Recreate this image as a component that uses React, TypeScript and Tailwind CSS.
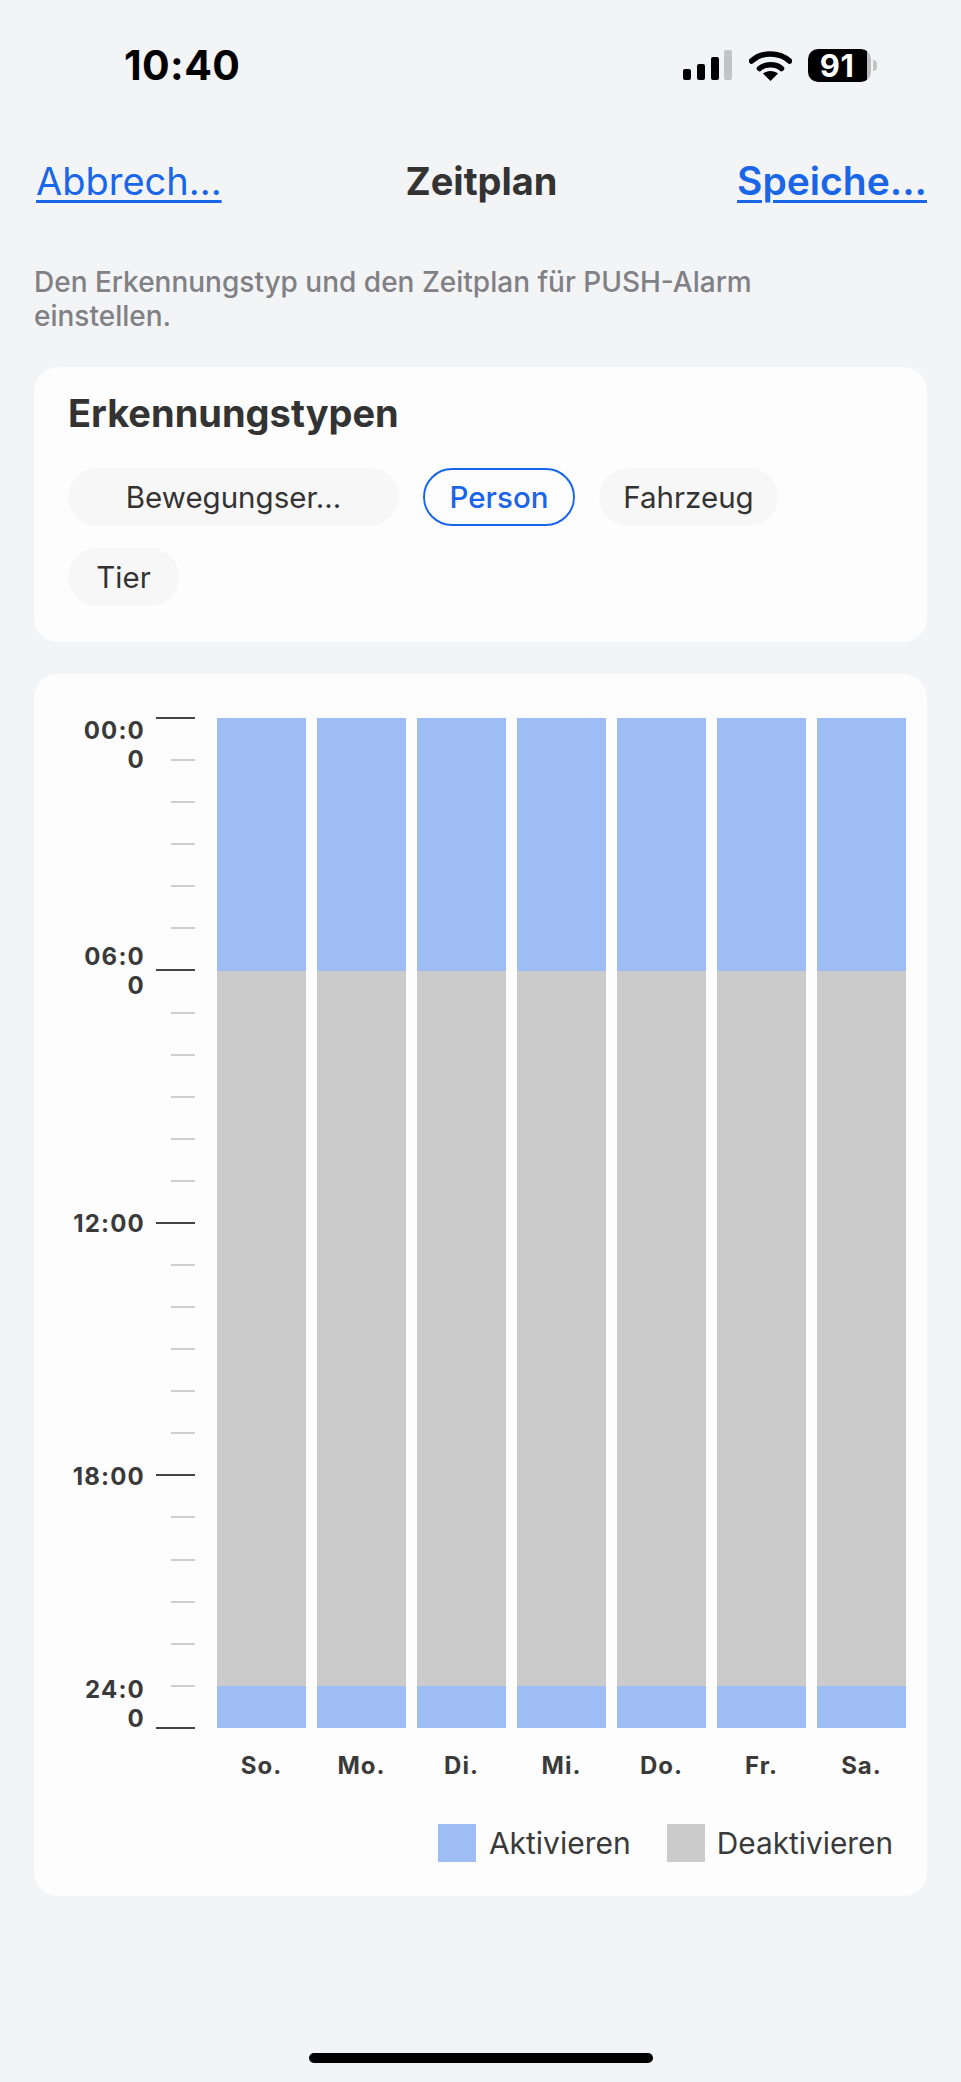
import React from 'react';

const FONT = "font-['Inter','Liberation_Sans',sans-serif]";

const days = ['So.', 'Mo.', 'Di.', 'Mi.', 'Do.', 'Fr.', 'Sa.'];

// hour => label lines, only every 6 hours has a label
const labels: Record<number, string[]> = {
  0: ['00:0', '0'],
  6: ['06:0', '0'],
  12: ['12:00'],
  18: ['18:00'],
  24: ['24:0', '0'],
};

function StatusBar() {
  return (
    <div className="flex items-center justify-between h-[34px] mt-[48px] pl-[124px] pr-[84px]">
      <span className="text-[41px] leading-[34px] font-bold text-black tracking-[0.4px]">10:40</span>
      <div className="flex items-center">
        <svg width="49" height="30" viewBox="0 0 49 30">
          <rect x="0" y="19" width="8" height="11" rx="2" fill="#000" />
          <rect x="14" y="14" width="8" height="16" rx="2" fill="#000" />
          <rect x="28" y="7" width="8" height="23" rx="2" fill="#000" />
          <rect x="41" y="0" width="8" height="30" rx="2" fill="#c4c4c4" />
        </svg>
        <svg className="ml-[17px]" width="43" height="31" viewBox="0 0 43 31">
          <path d="M2.5 11 C12.5 1.5 30.5 1.5 40.5 11" fill="none" stroke="#000" strokeWidth="5.5" strokeLinecap="round" />
          <path d="M10.5 18.5 C16 13.5 27 13.5 32.5 18.5" fill="none" stroke="#000" strokeWidth="5.5" strokeLinecap="round" />
          <path d="M21.5 31 L14 23.5 C18 20 25 20 29 23.5 Z" fill="#000" />
        </svg>
        <div className="ml-[16px] flex items-center">
          <div className="w-[63px] h-[33px] rounded-[10px] bg-[linear-gradient(90deg,#000_0,#000_93%,#bdbdbd_93%)] flex items-center justify-center pr-[5px]">
            <span className="text-[31px] leading-none font-bold text-white tracking-[0.5px]">91</span>
          </div>
          <div className="w-[4px] h-[11px] ml-[2px] rounded-r-full bg-[#c4c4c4]" />
        </div>
      </div>
    </div>
  );
}

function NavBar() {
  return (
    <div className="flex items-center justify-between mt-[74px] pl-[36px] pr-[34px]">
      <a className="w-[200px] text-[38px] leading-[50px] text-[#1a66e8] underline decoration-[3px] underline-offset-[5px]">Abbrech...</a>
      <h1 className="text-[38px] leading-[50px] font-bold text-[#333333]">Zeitplan</h1>
      <div className="w-[200px] flex justify-end">
        <a className="text-[39px] leading-[50px] font-semibold text-[#1a66e8] underline decoration-[3px] underline-offset-[5px]">Speiche...</a>
      </div>
    </div>
  );
}

function DetectionCard() {
  const chip = 'h-[58px] rounded-full flex items-center justify-center text-[29.5px]';
  return (
    <section className="mt-[34px] mx-[34px] h-[275px] rounded-[24px] bg-[#fdfdfd] pl-[34px] pr-[35px] pt-[24px]">
      <h2 className="text-[38px] leading-[44px] font-bold text-[#333333]">Erkennungstypen</h2>
      <div className="flex flex-wrap gap-x-[24px] gap-y-[22px] mt-[33px]">
        <div className={`${chip} w-[331px] bg-[#f7f7f7] text-[#333333]`}>Bewegungser...</div>
        <div className={`${chip} w-[152px] border-2 border-[#1a66e8] text-[#1a66e8] font-medium`}>Person</div>
        <div className={`${chip} w-[179px] bg-[#f7f7f7] text-[#333333]`}>Fahrzeug</div>
        <div className={`${chip} w-[111px] bg-[#f7f7f7] text-[#333333]`}>Tier</div>
      </div>
    </section>
  );
}

function Axis() {
  const hours = Array.from({ length: 25 }, (_, i) => i);
  return (
    <div className="w-[161px] h-[1010px] flex flex-col justify-between">
      {hours.map((h) => {
        const major = h % 6 === 0;
        const lines = labels[h];
        let align = 'items-center';
        let nudge = 'mt-[2px]';
        if (h === 0) {
          align = 'items-start';
          nudge = '-mt-[2px]';
        } else if (h === 24) {
          align = 'items-end';
          nudge = '-mb-[5px]';
        }
        return (
          <div key={h} className={`h-0 flex justify-end ${align}`}>
            {lines && (
              <div className={`${nudge} mr-[11px] text-right text-[24px] leading-[29px] font-bold text-[#3a3a3a] tracking-[1.2px]`}>
                {lines.map((l) => (
                  <div key={l}>{l}</div>
                ))}
              </div>
            )}
            <div
              className={
                major
                  ? 'self-center w-[39px] h-[2px] shrink-0 bg-[#444444]'
                  : 'self-center w-[24px] h-[2px] shrink-0 bg-[#cfcfcf]'
              }
            />
          </div>
        );
      })}
    </div>
  );
}

function ScheduleCard() {
  return (
    <section className="mt-[32px] mx-[34px] h-[1222px] rounded-[24px] bg-[#fdfdfd] pt-[44px] pr-[21px]">
      <div className="flex">
        <Axis />
        <div className="flex-1 ml-[22px] flex gap-[11px] h-[1010px]">
          {days.map((d) => (
            <div key={d} className="flex-1 flex flex-col">
              <div className="flex-[6] bg-[#9fbdf5]" />
              <div className="flex-[17] bg-[#cbcbcb]" />
              <div className="flex-[1] bg-[#9fbdf5]" />
            </div>
          ))}
        </div>
      </div>
      <div className="flex gap-[11px] ml-[183px] mt-[23px]">
        {days.map((d) => (
          <div key={d} className="flex-1 text-center text-[24px] leading-[30px] font-bold text-[#3a3a3a] tracking-[1px]">
            {d}
          </div>
        ))}
      </div>
      <div className="flex justify-end items-center mt-[43px] pr-[13px]">
        <div className="w-[38px] h-[38px] bg-[#9fbdf5]" />
        <span className="ml-[13px] text-[30px] leading-[38px] text-[#3a3a3a]">Aktivieren</span>
        <div className="w-[38px] h-[38px] ml-[36px] bg-[#cbcbcb]" />
        <span className="ml-[12px] text-[29.8px] leading-[38px] text-[#3a3a3a]">Deaktivieren</span>
      </div>
    </section>
  );
}

export default function App() {
  return (
    <div className={`${FONT} w-full h-[2082px] bg-[#f3f4f6] flex flex-col overflow-hidden`}>
      <StatusBar />
      <NavBar />
      <p className="mt-[59px] pl-[34px] pr-[100px] text-[28px] leading-[34px] font-medium text-[#808085]">
        Den Erkennungstyp und den Zeitplan für PUSH-Alarm einstellen.
      </p>
      <DetectionCard />
      <ScheduleCard />
      <div className="mt-auto mb-[19px] mx-auto w-[344px] h-[10px] rounded-full bg-black" />
    </div>
  );
}
